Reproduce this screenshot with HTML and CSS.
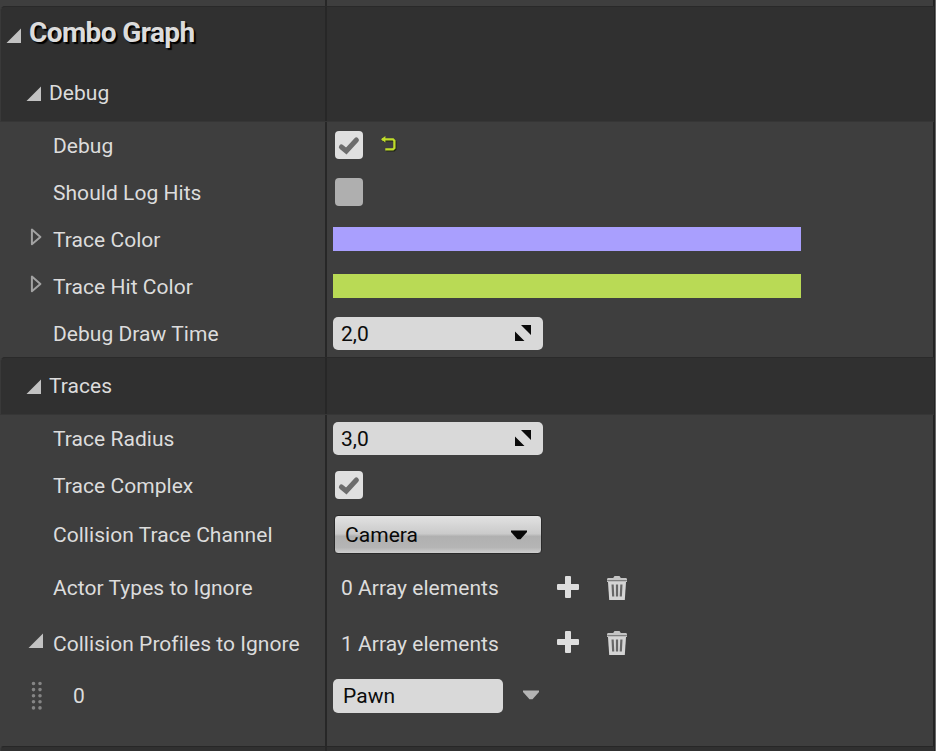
FILE: index.html
```html
<!DOCTYPE html>
<html lang="en">
<head>
<meta charset="utf-8">
<title>Combo Graph</title>
<link rel="stylesheet" href="styles.css">
</head>
<body>
<svg class="defs" width="0" height="0">
  <defs>
    <symbol id="open" viewBox="0 0 16 16"><path d="M15 0.5V15H0.5Z" fill="#c2c2c2"/></symbol>
    <symbol id="closed" viewBox="0 0 12 18"><path d="M1.9 1.6V16.2L10.4 8.9Z" fill="none" stroke="#a2a2a2" stroke-width="2" stroke-linejoin="round"/></symbol>
    <symbol id="check" viewBox="0 0 28 28"><path d="M6.4 16L11.3 20L21.4 9" fill="none" stroke="#6c6c6c" stroke-width="5" stroke-linecap="round"/></symbol>
    <symbol id="reset" viewBox="0 0 18 18"><path d="M2 4.3H13L14.4 5.7V13L13 14.4H5.3" transform="translate(1 1)" fill="none" stroke="#1f2412" stroke-width="2.2"/><path d="M2 4.3H13L14.4 5.7V13L13 14.4H5.3" fill="none" stroke="#bfdc2a" stroke-width="2.3"/><path d="M1 4.3L5.4 1V7.6Z" fill="#bfdc2a"/></symbol>
    <symbol id="spin" viewBox="0 0 18 18"><path d="M7 1H17V11ZM1 7.5V17H10.5Z" fill="#0b0b0b"/></symbol>
    <symbol id="plus" viewBox="0 0 24 24"><path d="M9 2Q9 1 10 1H14Q15 1 15 2V9H22Q23 9 23 10V14Q23 15 22 15H15V22Q15 23 14 23H10Q9 23 9 22V15H2Q1 15 1 14V10Q1 9 2 9H9Z" fill="#dedede"/></symbol>
    <symbol id="trash" viewBox="0 0 22 26"><path d="M7.2 3L8.5 1H13.5L14.8 3H20Q21 3 21 4.5V7H1V4.5Q1 3 2 3Z" fill="#c4c4c4"/><path d="M1.2 5.6H20.8" stroke="#777" stroke-width="1"/><path d="M2 7H20L18.8 25H3.2Z" fill="#d4d4d4"/><path d="M6.6 9.5L7.2 21.5M11 9.5V21.5M15.4 9.5L14.8 21.5" stroke="#666" stroke-width="2.2"/></symbol>
    <symbol id="down" viewBox="0 0 18 10"><path d="M1 0.5H17V2L10.5 9.2H7.5L1 2Z" fill="currentColor"/></symbol>
    <symbol id="grip" viewBox="0 0 12 30"><path d="M2.5 2.5V29M9 2.5V29" stroke="#858585" stroke-width="3.6" stroke-linecap="round" stroke-dasharray="0 6.1"/></symbol>
  </defs>
</svg>
<main class="panel">
  <div class="row edge"><div class="name"></div></div>
  <header class="row title">
    <h1 class="name"><svg class="arrow"><use href="#open"/></svg><span>Combo Graph</span></h1>
  </header>
  <h2 class="row section sub"><span class="name"><svg class="arrow"><use href="#open"/></svg><span>Debug</span></span></h2>
  <div class="row"><div class="name">Debug</div><div class="value"><span class="box on"><svg><use href="#check"/></svg></span><svg class="reset"><use href="#reset"/></svg></div></div>
  <div class="row"><div class="name">Should Log Hits</div><div class="value"><span class="box"></span></div></div>
  <div class="row"><div class="name expandable"><svg class="closed"><use href="#closed"/></svg>Trace Color</div><div class="value"><span class="swatch violet"></span></div></div>
  <div class="row"><div class="name expandable"><svg class="closed"><use href="#closed"/></svg>Trace Hit Color</div><div class="value"><span class="swatch lime"></span></div></div>
  <div class="row"><div class="name">Debug Draw Time</div><div class="value"><span class="field number">2,0<svg class="spin"><use href="#spin"/></svg></span></div></div>
  <h2 class="row section"><span class="name"><svg class="arrow"><use href="#open"/></svg><span>Traces</span></span></h2>
  <div class="row"><div class="name">Trace Radius</div><div class="value"><span class="field number">3,0<svg class="spin"><use href="#spin"/></svg></span></div></div>
  <div class="row"><div class="name">Trace Complex</div><div class="value"><span class="box on"><svg><use href="#check"/></svg></span></div></div>
  <div class="row channel"><div class="name">Collision Trace Channel</div><div class="value"><span class="select">Camera<svg class="down"><use href="#down"/></svg></span></div></div>
  <div class="row actors"><div class="name">Actor Types to Ignore</div><div class="value"><span class="count">0 Array elements</span><svg class="plus"><use href="#plus"/></svg><svg class="trash"><use href="#trash"/></svg></div></div>
  <div class="row profiles"><div class="name expandable"><svg class="arrow"><use href="#open"/></svg>Collision Profiles to Ignore</div><div class="value"><span class="count">1 Array elements</span><svg class="plus"><use href="#plus"/></svg><svg class="trash"><use href="#trash"/></svg></div></div>
  <div class="row item"><div class="name"><svg class="grip"><use href="#grip"/></svg>0</div><div class="value"><span class="field pawn">Pawn</span><svg class="down"><use href="#down"/></svg></div></div>
  <div class="row gap"><div class="name"></div></div>
  <div class="row footer"><div class="name"></div></div>
</main>
</body>
</html>
```
FILE: styles.css
```css
* { box-sizing: border-box; }
body {
  margin: 0;
  background: #3e3e3e;
  color: #dcdcdc;
  font: 21px/24px Roboto, "Liberation Sans", sans-serif;
  letter-spacing: 0.04px;
}
.defs { position: absolute; }
svg { flex: none; display: block; }
.panel {
  width: 936px;
  height: 751px;
  overflow: hidden;
  border-right: 1px solid #686868;
  box-shadow: inset -2px 0 #232323;
}
.row {
  display: grid;
  grid-template-columns: 327px 1fr;
  height: 47px;
  margin: 0 1px 0 0;
}
.name {
  display: flex;
  align-items: center;
  padding-left: 53px;
  border-right: 2px solid #272727;
  white-space: nowrap;
}
.value { display: flex; align-items: center; padding-left: 6px; }
.edge { height: 6px; }
.title, .section, .footer { background: #303030; border-left: 1px solid #393939; grid-template-columns: 326px 1fr; }
.title { height: 59px; border-top: 1px solid #292929; border-top-left-radius: 5px; }
.title .name {
  margin: 0;
  padding: 0 0 7px 5px;
  font-size: 28px;
  font-weight: 700;
  letter-spacing: -0.6px;
  text-shadow: 2px 2px 1px #000;
}
.title .arrow { margin: 6px 7px 0 0; }
.arrow { width: 16px; height: 16px; }
.section {
  height: 58px;
  font-size: inherit;
  font-weight: 400;
  border-top: 1px solid #2a2a2a;
  border-bottom: 1px solid #363636;
  border-top-left-radius: 5px;
}
.sub { height: 57px; border-top: 0; border-radius: 0; }
.section .name { padding-left: 25px; gap: 7px; }
.section .arrow { margin-top: 2px; }
.expandable { padding-left: 30px; }
.closed { width: 12px; height: 18px; margin: -5px 11px 0 0; }
.expandable .arrow { margin: -5px 9px 0 -2px; }
.box {
  width: 28px;
  height: 28px;
  margin: -2px 0 0 2px;
  border-radius: 4px;
  background: #afafaf;
}
.on { background: #dfdfdf; }
.box svg { width: 28px; height: 28px; }
.reset { width: 18px; height: 18px; margin: -3px 0 0 17px; }
.swatch { width: 468px; height: 24px; margin-top: -2px; }
.violet { background: #a99ffe; }
.lime { background: #b9da55; }
.field {
  display: flex;
  align-items: center;
  height: 33px;
  border-radius: 5px;
  background: #d9d9d9;
  color: #0c0c0c;
}
.number { width: 210px; padding: 0 11px 0 8px; justify-content: space-between; }
.spin { width: 18px; height: 18px; margin-top: -2px; }
.channel { height: 52px; }
.select {
  display: flex;
  align-items: center;
  justify-content: space-between;
  width: 208px;
  height: 39px;
  margin: -1px 0 0 1px;
  padding: 0 13px 0 10px;
  border: 1px solid #2a2a2a;
  border-radius: 4px;
  background: linear-gradient(#e2e2e2, #cacaca 48%, #b0b0b0 55%, #b5b5b5 85%, #cecece);
  color: #080808;
}
.down { width: 18px; height: 10px; }
.actors { height: 54px; }
.profiles { height: 57px; }
.count { width: 222px; padding-left: 8px; }
.plus { width: 24px; height: 24px; margin: -3px 0 0 1px; }
.trash { width: 22px; height: 26px; margin: -1px 0 0 26px; }
.item { height: 47px; }
.item .name { padding-left: 31px; }
.grip { width: 12px; height: 30px; margin-right: 30px; }
.pawn { width: 170px; height: 34px; padding-left: 10px; }
.item .down { margin: -1px 0 0 19px; color: #b4b4b4; }
.gap { height: 27px; }
.footer { height: 6px; border-top: 1px solid #272727; border-top-left-radius: 4px; }
```
